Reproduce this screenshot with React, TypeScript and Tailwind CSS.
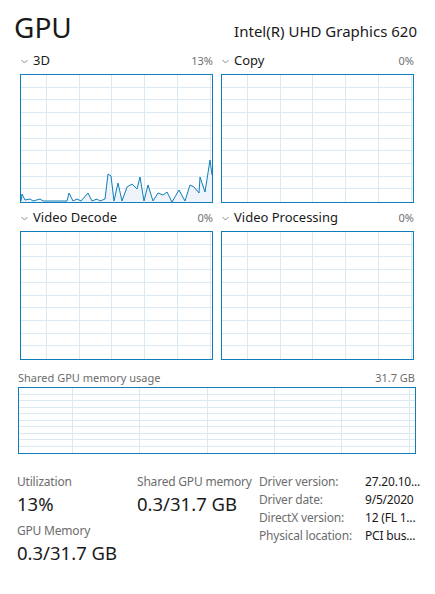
import React from "react";

const BLUE = "#117dbb";
const GRID = "#d9eaf4";

const FONT = { fontFamily: '"Noto Sans", "Open Sans", sans-serif' };

// 3D engine history, in chart-interior coordinates (191 x 127)
const POINTS: [number, number][] = [
  [0, 126], [1, 119], [4, 125], [9, 124], [12, 126], [19, 124], [22, 126],
  [46, 126], [48, 118], [52, 126], [56, 124], [60, 126], [67, 118], [71, 126],
  [76, 124], [79, 126], [84, 124], [87, 99], [90, 101], [93, 126], [97, 108],
  [101, 126], [106, 112], [111, 109], [116, 114], [119, 102], [123, 126],
  [127, 110], [132, 126], [137, 118], [142, 120], [146, 117], [151, 127],
  [158, 115], [164, 126], [169, 110], [173, 112], [178, 118], [179, 102],
  [184, 117], [189, 85], [191, 100],
];

function Grid({
  w,
  h,
  cols,
  rows,
  children,
}: {
  w: number;
  h: number;
  cols: number[];
  rows: number;
  children?: React.ReactNode;
}) {
  const step = h / rows;
  return (
    <svg width={w} height={h} className="block">
      {Array.from({ length: rows - 1 }, (_, i) => (
        <line
          key={"h" + i}
          x1={0}
          x2={w}
          y1={Math.round(step * (i + 1)) - 0.5}
          y2={Math.round(step * (i + 1)) - 0.5}
          stroke={GRID}
          strokeWidth={1}
        />
      ))}
      {cols.map((x) => (
        <line
          key={"v" + x}
          x1={x + 0.5}
          x2={x + 0.5}
          y1={0}
          y2={h}
          stroke={GRID}
          strokeWidth={1}
        />
      ))}
      {children}
    </svg>
  );
}

function Chevron() {
  return (
    <svg width="7" height="5" viewBox="0 0 7 5" className="mr-[5px]">
      <polyline
        points="0.5,1 3.5,4 6.5,1"
        fill="none"
        stroke="#8a8a8a"
        strokeWidth="1"
      />
    </svg>
  );
}

function EngineChart({
  name,
  pct,
  graph,
}: {
  name: string;
  pct: string;
  graph?: boolean;
}) {
  const line = POINTS.map((p) => p.join(",")).join(" ");
  return (
    <div className="w-[193px]">
      <div className="h-[20px] flex items-center justify-between">
        <div className="flex items-center pl-[1px]">
          <Chevron />
          <span className="text-[13px] text-[#1a1a1a]">{name}</span>
        </div>
        <span className="text-[11px] text-[#707070]">{pct}</span>
      </div>
      <div className="mt-[3px] h-[129px] border border-[#117dbb] bg-white">
        <Grid w={191} h={127} cols={[25, 58, 90, 123, 156, 189]} rows={10}>
          {graph && (
            <>
              <polygon points={`0,127 ${line} 191,127`} fill="#eef4f9" />
              <polyline
                points={line}
                fill="none"
                stroke={BLUE}
                strokeWidth={1}
                strokeLinejoin="round"
              />
            </>
          )}
        </Grid>
      </div>
    </div>
  );
}

function Stat({ label, value }: { label: string; value: string }) {
  return (
    <div className="whitespace-nowrap">
      <div className="text-[12px] leading-[18px] tracking-[-0.2px] text-[#6d6d6d]">
        {label}
      </div>
      <div className="text-[18.5px] leading-[24px] text-[#1a1a1a] mt-[1px]">
        {value}
      </div>
    </div>
  );
}

export default function App() {
  const info = [
    ["Driver version:", "27.20.10..."],
    ["Driver date:", "9/5/2020"],
    ["DirectX version:", "12 (FL 1..."],
    ["Physical location:", "PCI bus..."],
  ];

  return (
    <div
      className="w-[435px] h-[594px] bg-white overflow-hidden text-[#1a1a1a]"
      style={FONT}
    >
      {/* Header */}
      <div className="flex items-end justify-between pl-[14px] pr-[18px] pt-[10px] h-[44px]">
        <span className="text-[28px] leading-[34px]">GPU</span>
        <span className="text-[15px] leading-[20px] mb-[3px]">
          Intel(R) UHD Graphics 620
        </span>
      </div>

      {/* Engine charts */}
      <div className="pl-[20px] pt-[7px] grid grid-cols-[193px_193px] gap-x-[8px] gap-y-[5px]">
        <EngineChart name="3D" pct="13%" graph />
        <EngineChart name="Copy" pct="0%" />
        <EngineChart name="Video Decode" pct="0%" />
        <EngineChart name="Video Processing" pct="0%" />
      </div>

      {/* Shared memory */}
      <div className="pl-[18px] pr-[20px] mt-[10px]">
        <div className="h-[16px] flex items-center justify-between text-[11px] text-[#6d6d6d]">
          <span>Shared GPU memory usage</span>
          <span>31.7 GB</span>
        </div>
        <div className="mt-[1px] w-[398px] h-[67px] border border-[#117dbb]">
          <Grid w={396} h={65} cols={[53, 120, 188, 255, 322, 390]} rows={10} />
        </div>
      </div>

      {/* Stats */}
      <div className="flex pl-[17px] mt-[19px]">
        <div className="w-[120px] flex flex-col gap-[6px]">
          <Stat label="Utilization" value="13%" />
          <Stat label="GPU Memory" value="0.3/31.7 GB" />
        </div>
        <div className="w-[122px]">
          <Stat label="Shared GPU memory" value="0.3/31.7 GB" />
        </div>
        <div className="flex flex-col">
          {info.map(([k, v]) => (
            <div
              key={k}
              className="flex text-[12px] leading-[18px] tracking-[-0.2px] whitespace-nowrap"
            >
              <span className="w-[106px] text-[#6d6d6d]">{k}</span>
              <span className="text-[#1a1a1a]">{v}</span>
            </div>
          ))}
        </div>
      </div>
    </div>
  );
}
